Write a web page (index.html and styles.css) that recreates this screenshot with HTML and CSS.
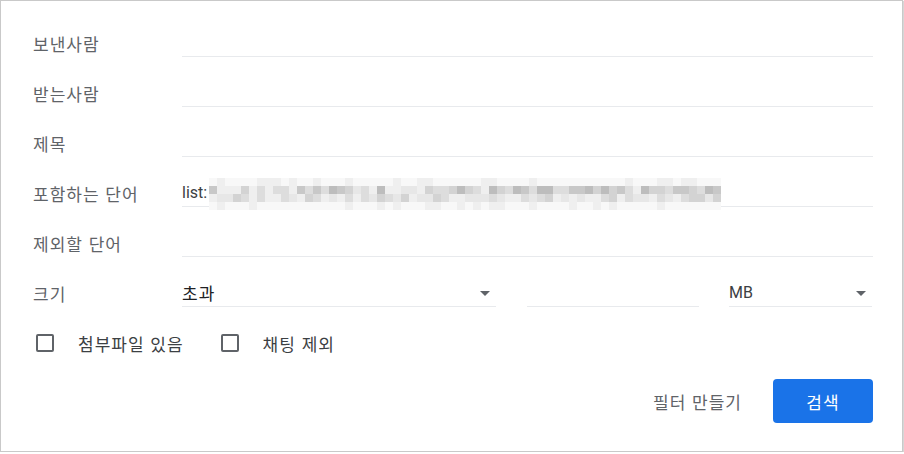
FILE: index.html
```html
<!DOCTYPE html>
<html lang="ko">
<head>
    <meta charset="UTF-8">
    <title>검색 옵션</title>
    <link rel="stylesheet" href="styles.css">
</head>
<body>
    <div class="dialog">
        <div class="row">
            <label class="label">보낸사람</label>
            <div class="field"></div>
        </div>
        <div class="row">
            <label class="label">받는사람</label>
            <div class="field"></div>
        </div>
        <div class="row">
            <label class="label">제목</label>
            <div class="field"></div>
        </div>
        <div class="row">
            <label class="label">포함하는 단어</label>
            <div class="field">
                <span class="value">list:</span>
                <div class="mosaic" id="mosaic"></div>
            </div>
        </div>
        <div class="row">
            <label class="label">제외할 단어</label>
            <div class="field"></div>
        </div>
        <div class="row">
            <label class="label">크기</label>
            <div class="size-fields">
                <div class="field select compare"><span class="value ko">초과</span><span class="arrow"></span></div>
                <div class="field number"></div>
                <div class="field select unit"><span class="value">MB</span><span class="arrow"></span></div>
            </div>
        </div>
        <div class="checks">
            <label class="check"><span class="box"></span>첨부파일 있음</label>
            <label class="check"><span class="box"></span>채팅 제외</label>
        </div>
        <div class="actions">
            <button class="text-btn">필터 만들기</button>
            <button class="primary-btn">검색</button>
        </div>
    </div>

    <script>
        // pixelated placeholder for the hidden address
        const shades = ["#f8f8f8", "#efefef", "#e7e7e7", "#dddddd", "#d3d3d3", "#c8c8c8", "#bdbdbd"];
        const rowWeights = [0, 4, 2, 0];
        const mosaic = document.getElementById("mosaic");
        let seed = 7;
        function rand() {
            seed = (seed * 9301 + 49297) % 233280;
            return seed / 233280;
        }
        for (let r = 0; r < 4; r++) {
            for (let c = 0; c < 64; c++) {
                let cell = document.createElement("span");
                let level = Math.floor(rand() * (rowWeights[r] + 2));
                if (r === 0 || r === 3) level = rand() < 0.25 ? 1 : 0;
                cell.style.background = shades[Math.min(level + (r === 1 || r === 2 ? 1 : 0), shades.length - 1)];
                mosaic.appendChild(cell);
            }
        }
    </script>
</body>
</html>
```

FILE: styles.css
```css
body {
    margin: 0;
    background: #fff;
    font-family: "Noto Sans CJK KR", "Noto Sans", sans-serif;
}
.dialog {
    width: 903px;
    height: 452px;
    border: 1px solid #c9c9c9;
    box-shadow: 1px 1px 1px #d6d6d6;
    padding: 17px 29px 0 32px;
    box-sizing: border-box;
}
.row {
    display: flex;
    align-items: center;
    height: 50px;
}
.label {
    width: 149px;
    flex: none;
    font-size: 17px;
    letter-spacing: 1px;
    color: #5f6368;
}
.field {
    flex: 1;
    height: 26px;
    border-bottom: 1px solid #e8eaed;
    display: flex;
    align-items: center;
}
.value {
    font-family: Roboto, "Noto Sans CJK KR", sans-serif;
    font-size: 16px;
    color: #3c4043;
}
.value.ko {
    font-family: "Noto Sans CJK KR", sans-serif;
    font-size: 17px;
    letter-spacing: 1px;
    color: #202124;
}
.mosaic {
    display: grid;
    grid-template-columns: repeat(64, 8px);
    grid-template-rows: repeat(4, 8px);
    margin-top: 3px;
    margin-left: 2px;
}
.mosaic span {
    display: block;
}
.size-fields {
    flex: 1;
    display: flex;
    gap: 30px;
}
.compare {
    flex: none;
    width: 314px;
}
.number {
    flex: none;
    width: 172px;
    margin-left: 1px;
}
.unit {
    flex: none;
    width: 143px;
}
.select {
    justify-content: space-between;
}
.arrow {
    width: 0;
    height: 0;
    border-left: 5px solid transparent;
    border-right: 5px solid transparent;
    border-top: 5px solid #5f6368;
    margin-right: 6px;
    margin-top: 2px;
}
.checks {
    display: flex;
    align-items: center;
    height: 52px;
    margin-top: -1px;
}
.check {
    display: flex;
    align-items: center;
    font-size: 17px;
    letter-spacing: 1px;
    color: #3c4043;
    margin-right: 34px;
}
.box {
    width: 14px;
    height: 14px;
    border: 2px solid #5f6368;
    border-radius: 2px;
    margin: 0 24px 0 3px;
}
.actions {
    display: flex;
    justify-content: flex-end;
    align-items: center;
    margin-top: 10px;
    gap: 8px;
}
button {
    font-family: "Noto Sans CJK KR", sans-serif;
    font-size: 17px;
    letter-spacing: 1px;
    border: none;
    cursor: pointer;
}
.text-btn {
    background: none;
    color: #5f6368;
    padding: 0 23px;
    height: 44px;
}
.primary-btn {
    width: 100px;
    height: 44px;
    background-color: #1a73e8;
    color: white;
    border-radius: 4px;
}
.primary-btn:hover {
    background-color: #1765cc;
}
```
